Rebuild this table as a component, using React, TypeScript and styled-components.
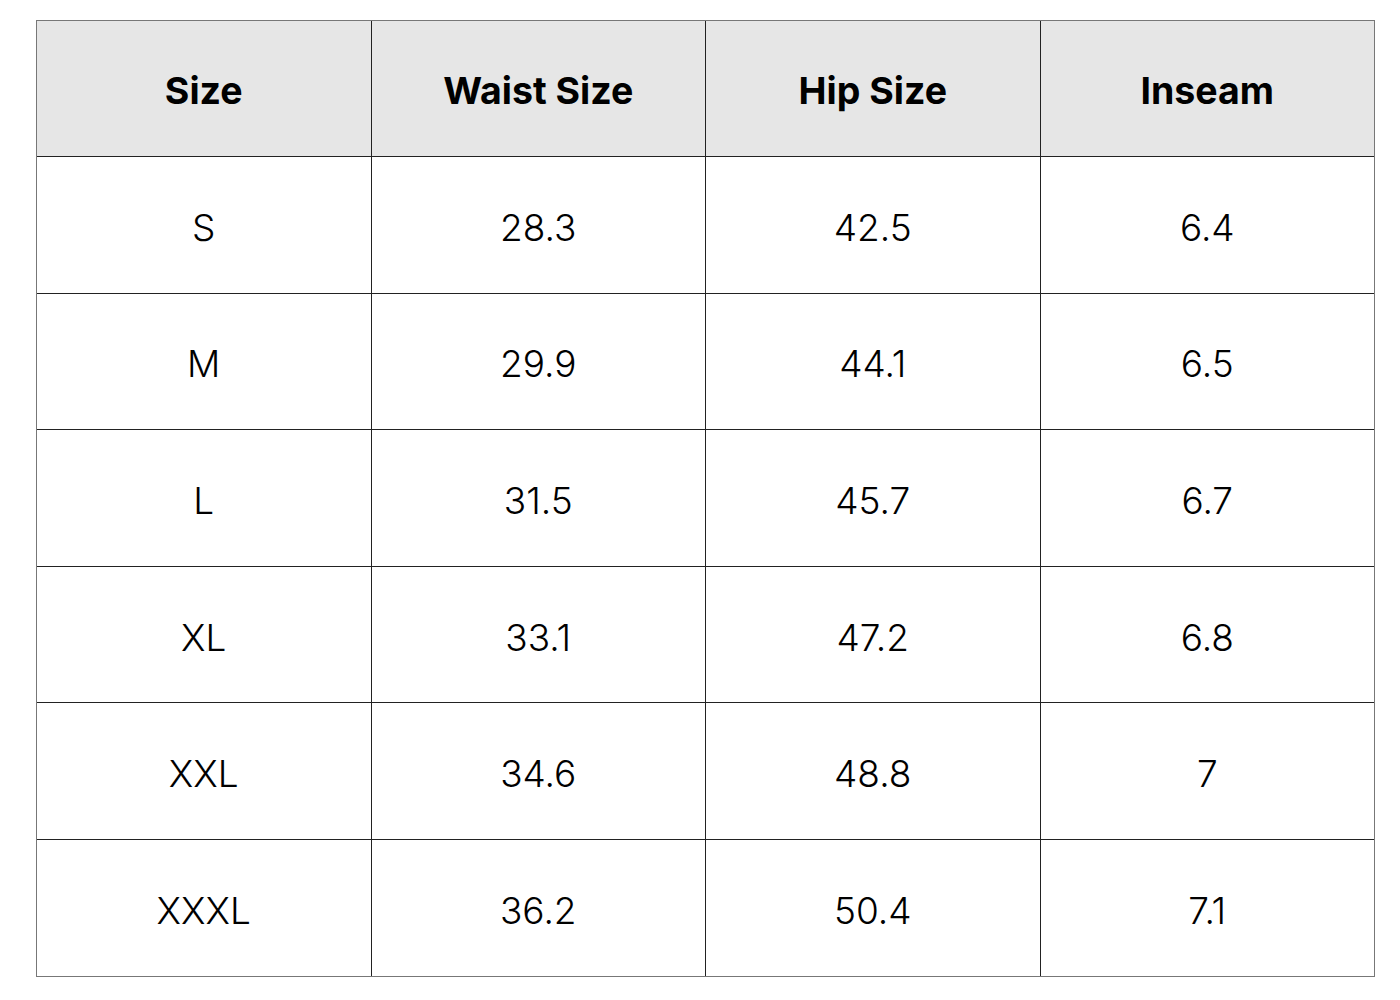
import styled, { createGlobalStyle } from "styled-components";

const rows = [
  ["S", "28.3", "42.5", "6.4"],
  ["M", "29.9", "44.1", "6.5"],
  ["L", "31.5", "45.7", "6.7"],
  ["XL", "33.1", "47.2", "6.8"],
  ["XXL", "34.6", "48.8", "7"],
  ["XXXL", "36.2", "50.4", "7.1"],
];

const headers = ["Size", "Waist Size", "Hip Size", "Inseam"];

const App = () => {
  return (
    <Page>
      <GlobalStyle />
      <Table>
        <thead>
          <tr>
            {headers.map((h) => (
              <Head key={h}>{h}</Head>
            ))}
          </tr>
        </thead>
        <tbody>
          {rows.map((r) => (
            <tr key={r[0]}>
              {r.map((c, i) => (
                <Cell key={i}>{c}</Cell>
              ))}
            </tr>
          ))}
        </tbody>
      </Table>
    </Page>
  );
};

export default App;

const GlobalStyle = createGlobalStyle`
  body {
    margin: 0;
    background: #ffffff;
    font-family: Inter, "Open Sans", "Liberation Sans", sans-serif;
    color: #000;
  }
`;

const Page = styled.div`
  width: 1400px;
  height: 1000px;
  padding: 20px 0 0 36px;
  box-sizing: border-box;
`;

const Table = styled.table`
  width: 1339px;
  border-collapse: collapse;
  table-layout: fixed;
  outline: 1px solid #777;
  outline-offset: -1px;
`;

const Head = styled.th`
  height: 136px;
  background: #e6e6e6;
  border: 1px solid #222;
  font-size: 37.5px;
  font-weight: 700;
  text-align: center;
  vertical-align: middle;
  padding: 3px 0 0;
  box-sizing: border-box;
`;

const Cell = styled.td`
  height: 136.6px;
  border: 1px solid #222;
  font-size: 37px;
  font-weight: 300;
  text-align: center;
  vertical-align: middle;
  padding: 5px 0 0;
  box-sizing: border-box;
`;
